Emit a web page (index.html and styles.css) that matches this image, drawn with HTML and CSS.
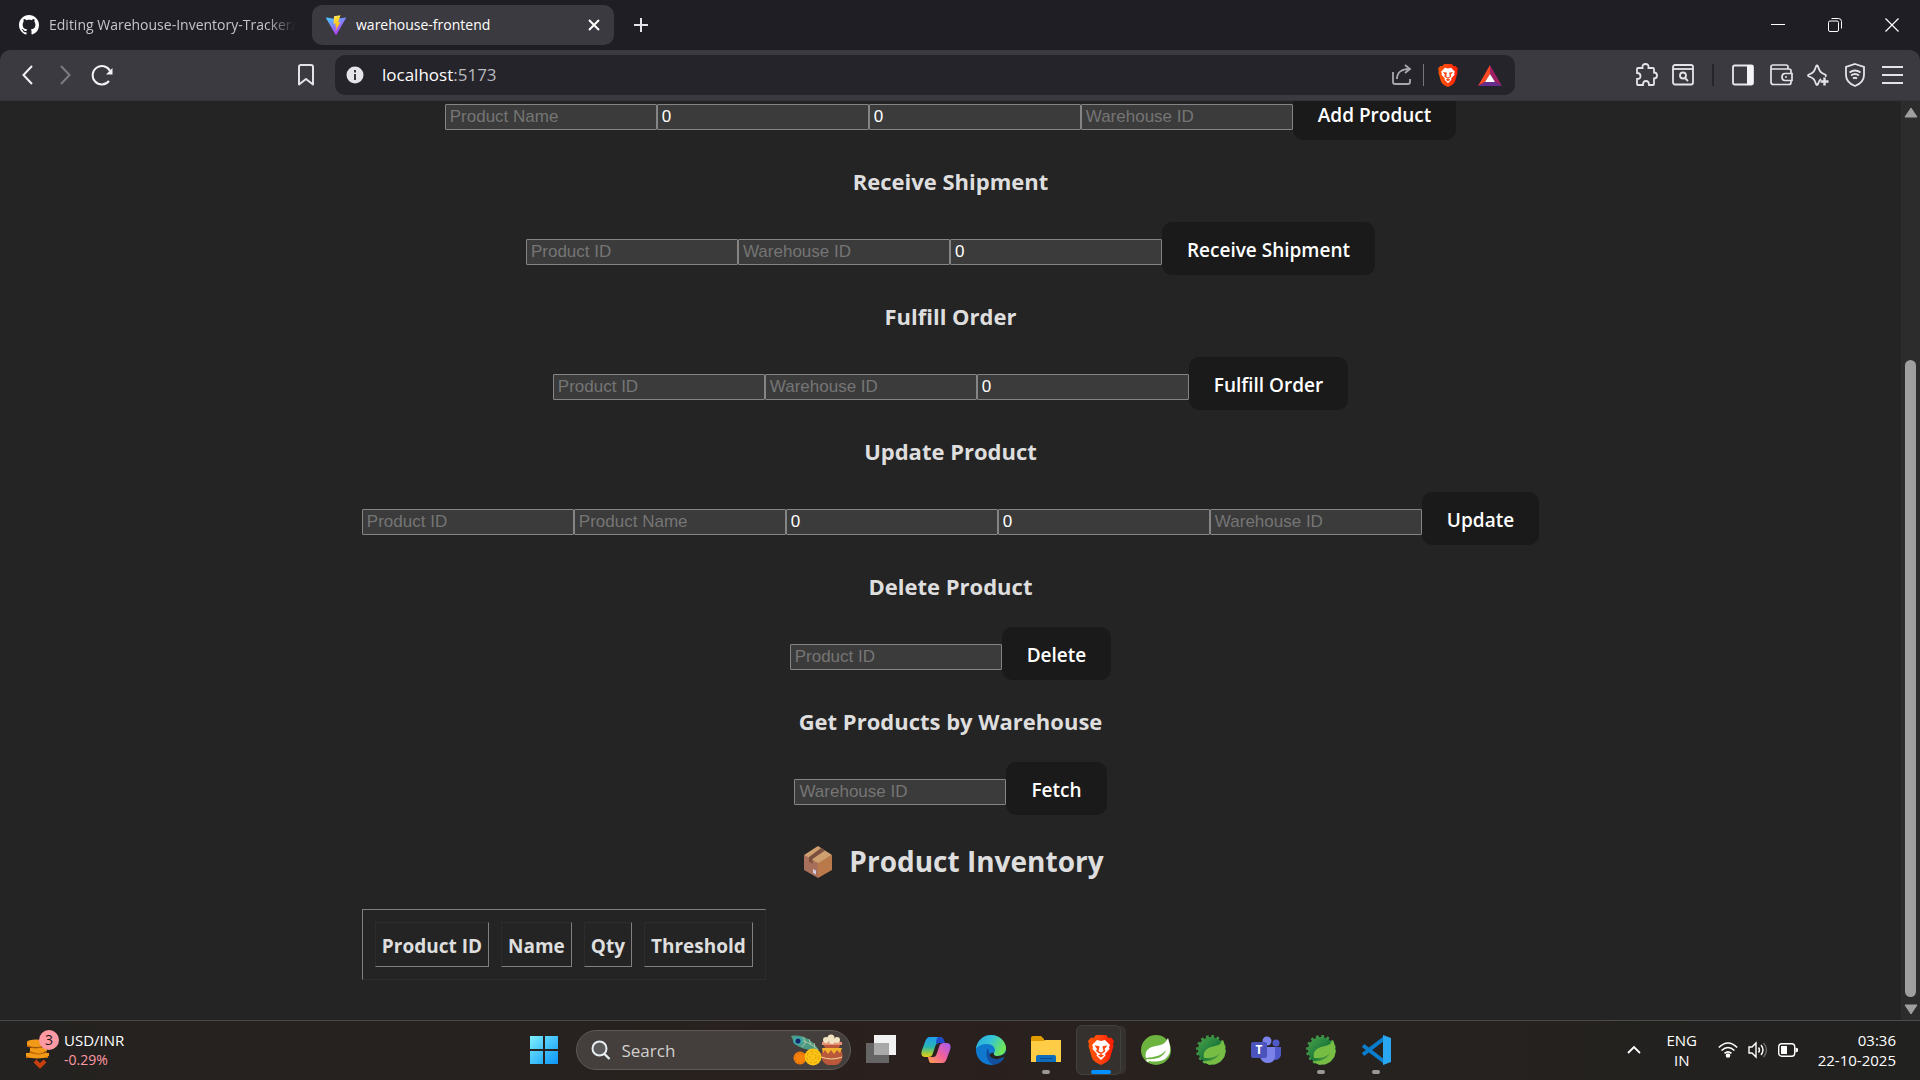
FILE: index.html
```html
<!DOCTYPE html>
<html lang="en">
<head>
<meta charset="utf-8">
<title>warehouse-frontend</title>
<link rel="stylesheet" href="styles.css">
</head>
<body>
<svg class="defs" aria-hidden="true">
  <defs>
    <linearGradient id="brave-fill" x1="0" y1="0" x2="1" y2="0"><stop offset="0" stop-color="#ff5500"/><stop offset=".45" stop-color="#ff4510"/><stop offset="1" stop-color="#ff1a00"/></linearGradient>
    <linearGradient id="gear-fill" x1="0" y1="0" x2="1" y2="1"><stop offset="0" stop-color="#4aa14a"/><stop offset=".5" stop-color="#1d7a3a"/><stop offset="1" stop-color="#6db33f"/></linearGradient>
    <symbol id="brave" viewBox="0 0 26 30">
      <path fill="url(#brave-fill)" d="M8 0h10l2.500 3 2.500-.5L26 6l-1 3 .5 2L22 23c-1 3-5 5-9 7-4-2-8-4-9-7L.5 11 1 9 0 6l3-3.500 2.500.5z"/>
      <path fill="#fff" d="M13 6l4-1 5 5-1 2 .5 2-4.500 5 .5 1.500L13 25l-4.500-4.500L9 19l-4.500-5L5 12l-1-2 5-5z"/>
      <path fill="#ff4510" d="M6.500 10.500l4.500.5.5 1-1 4 2.500 1.500 2.500-1.500-1-4 .5-1 4.500-.5-3 3.500 1 2-2.500 2L13 19l-2.500-1-2.500-2 1-2zM10 20.500l3-1.500 3 1.500-3 2z"/>
    </symbol>
    <symbol id="spring-boot" viewBox="0 0 30 30">
      <circle cx="15" cy="15" r="13" fill="url(#gear-fill)"/>
      <circle cx="15" cy="15" r="13.500" fill="none" stroke="#3d9643" stroke-width="3" stroke-dasharray="2.600 2.700"/>
      <circle cx="15" cy="16" r="12.500" fill="url(#gear-fill)"/>
      <path fill="#77bc43" d="M27 5c3 7 4 15-1 20-5 6-14 6-20 1 8 1 15-2 18-8-5 5-9 5-16 5-2-8 5-11 11-12 4-1 6-2 8-6z"/>
    </symbol>
  </defs>
</svg>

<div class="screen">
  <header class="tab-strip">
    <div class="tabs">
      <div class="tab">
        <svg class="tab-icon" viewBox="0 0 16 16"><path fill="#fff" d="M8 0C3.580 0 0 3.580 0 8c0 3.540 2.290 6.530 5.470 7.590.4.070.55-.17.55-.38 0-.19-.01-.82-.01-1.490-2.010.37-2.530-.49-2.690-.94-.09-.23-.48-.94-.82-1.130-.28-.15-.68-.52-.01-.53.63-.01 1.080.58 1.230.82.72 1.210 1.870.87 2.330.66.070-.52.28-.87.51-1.070-1.780-.2-3.640-.89-3.640-3.950 0-.87.31-1.590.82-2.150-.08-.2-.36-1.020.080-2.120 0 0 .67-.21 2.200.82.64-.18 1.320-.27 2-.27s1.360.090 2 .27c1.530-1.040 2.200-.82 2.200-.82.44 1.100.16 1.920.080 2.120.51.56.82 1.270.82 2.150 0 3.070-1.870 3.750-3.650 3.950.29.25.54.73.54 1.480 0 1.070-.01 1.930-.01 2.200 0 .21.15.46.55.38A8.010 8.010 0 0016 8c0-4.420-3.580-8-8-8z"/></svg>
        <span class="tab-title tab-title-faded">Editing Warehouse-Inventory-Tracker/</span>
      </div>
      <div class="tab tab-active">
        <svg class="tab-icon" viewBox="0 0 20 20">
          <defs><linearGradient id="vite-a" x1="0" y1="0" x2=".6" y2="1"><stop offset="0" stop-color="#41d1ff"/><stop offset="1" stop-color="#bd34fe"/></linearGradient><linearGradient id="vite-b" x1=".3" y1="0" x2=".5" y2="1"><stop offset="0" stop-color="#ffea83"/><stop offset=".2" stop-color="#ffdd35"/><stop offset="1" stop-color="#ffa800"/></linearGradient></defs>
          <path fill="url(#vite-a)" d="M.5 2.500L10 4l9.500-1.500c.4 0 .6.3.4.7l-9.500 16.500c-.2.300-.6.300-.8 0L.1 3.200c-.2-.4 0-.7.4-.7z"/>
          <path fill="url(#vite-b)" d="M14.500.2L8 1.300l-.5 7.500 2.300-.4-.7 3.200 1.500-.4-1.200 5.500 5-9.700-2.300.4z"/>
        </svg>
        <span class="tab-title">warehouse-frontend</span>
        <button class="tab-close" aria-label="Close tab"><svg width="12" height="12" viewBox="0 0 12 12"><path d="M1 1l10 10M11 1L1 11" stroke="#fff" stroke-width="2"/></svg></button>
      </div>
      <button class="new-tab" aria-label="New tab"><svg width="14" height="14" viewBox="0 0 14 14"><path d="M7 0v14M0 7h14" stroke="#e4e4e8" stroke-width="2"/></svg></button>
    </div>
    <div class="window-controls">
      <button aria-label="Minimize"><svg width="14" height="14" viewBox="0 0 14 14"><path d="M0 6.500h14" stroke="#fff"/></svg></button>
      <button aria-label="Restore"><svg width="14" height="14" viewBox="0 0 14 14" fill="none" stroke="#fff"><rect x=".5" y="3" width="10" height="10.500" rx="1.500"/><path d="M3.500.5h7a3 3 0 013 3v7"/></svg></button>
      <button aria-label="Close"><svg width="14" height="14" viewBox="0 0 14 14"><path d="M.5.500l13 13M13.500.500l-13 13" stroke="#fff" stroke-width="1.200"/></svg></button>
    </div>
  </header>

  <nav class="toolbar" aria-label="Browser toolbar">
    <div class="toolbar-left">
      <button aria-label="Back"><svg width="22" height="22" viewBox="0 0 22 22"><path d="M15 2l-8.500 9 8.500 9" fill="none" stroke="#f2f2f5" stroke-width="2"/></svg></button>
      <button aria-label="Forward"><svg width="22" height="22" viewBox="0 0 22 22"><path d="M7 2l8.500 9L7 20" fill="none" stroke="#7d7c83" stroke-width="2"/></svg></button>
      <button aria-label="Reload"><svg width="22" height="22" viewBox="0 0 22 22"><path d="M18 17A9.200 9.200 0 1119 7" fill="none" stroke="#f2f2f5" stroke-width="2"/><path d="M21.500 4v6.500H15z" fill="#f2f2f5"/></svg></button>
      <button class="bookmark" aria-label="Bookmark"><svg width="22" height="22" viewBox="0 0 22 22"><path d="M4 3q0-2 2-2h10q2 0 2 2v17.500L11 15l-7 5.500z" fill="none" stroke="#e4e4e8" stroke-width="2" stroke-linejoin="round"/></svg></button>
    </div>
    <div class="url-bar">
      <svg width="18" height="18" viewBox="0 0 18 18"><circle cx="9" cy="9" r="8.500" fill="#e4e4ea"/><path d="M9 4v2.500M9 8v6" stroke="#37363c" stroke-width="2"/></svg>
      <span class="url"><span class="host">localhost</span>:5173</span>
      <button aria-label="Share"><svg width="22" height="22" viewBox="0 0 22 22" fill="none" stroke="#a9a8b0" stroke-width="1.800"><path d="M2 8v10q0 2 2 2h13q2 0 2-2v-3M6 15c0-7 5-10 12-10M14 1l5 4-5 4"/></svg></button>
      <span class="url-divider"></span>
      <button aria-label="Brave Shields"><svg width="20" height="23"><use href="#brave"/></svg></button>
      <button aria-label="Rewards"><svg width="24" height="21" viewBox="0 0 24 21"><path fill="#ff4724" d="M12 0L0 21l7-4 5-8z"/><path fill="#9e1f63" d="M12 0l12 21-7-4-5-8z"/><path fill="#662d91" d="M0 21h24l-7-4H7z"/><path fill="#fff" d="M12 9l5 8H7z"/></svg></button>
    </div>
    <div class="toolbar-right">
      <button aria-label="Extensions"><svg width="24" height="24" viewBox="0 0 24 24"><path d="M4 5h4.500C8 2 9.500 1 11.500 1S15 2 14.500 5H19q1 0 1 1v3.500c2 0 3 1 3 3s-1 3-3 3V21q0 1-1 1h-4c0-3-1-4-3-4s-3 1-3 4H4q-1 0-1-1v-5c2.500 0 3.500-1 3.500-3s-1-3-3.500-3V6q0-1 1-1z" fill="none" stroke="#e4e4e8" stroke-width="1.800"/></svg></button>
      <button aria-label="Search tabs"><svg width="24" height="24" viewBox="0 0 24 24" fill="none" stroke="#e4e4e8" stroke-width="1.800"><rect x="2" y="2" width="20" height="19.500" rx="2"/><path d="M2 6h20"/><circle cx="12" cy="12.500" r="3"/><path d="M14 15l3 3"/></svg></button>
      <span class="bar-divider"></span>
      <button aria-label="Sidebar"><svg width="24" height="24" viewBox="0 0 24 24"><rect x="2" y="2.500" width="20" height="19" rx="1.500" fill="none" stroke="#e8e8ec" stroke-width="1.800"/><path fill="#f4f4f7" d="M16 2h6v20h-6z"/></svg></button>
      <button aria-label="Wallet"><svg width="24" height="24" viewBox="0 0 24 24" fill="none" stroke="#e4e4e8" stroke-width="1.700"><path d="M22 10V8q0-2-2-2H2v13q0 2.500 2.500 2.500H20q2 0 2-2v-2M2 6V4q0-2 2-2h13q2 0 2 2v2"/><path d="M23 10.500h-7q-3 0-3 3.500t3 3.500h7zM16 14h2"/></svg></button>
      <button aria-label="Leo AI"><svg width="24" height="24" viewBox="0 0 24 24" fill="none" stroke="#e4e4e8" stroke-width="1.800"><path d="M15 16c-1.500 1-2 2-3 5q-1 2-2 0c-1.500-5-3-6-7-7.500q-2-1 0-2C7 10 8.500 8.500 10 3.500q1-2 2 0c1.500 5 3 6.500 7 8q2 1 0 2"/><path d="M18.500 14.500v8M14.500 18.500h8" stroke-width="2.400"/></svg></button>
      <button aria-label="VPN"><svg width="24" height="24" viewBox="0 0 24 24" fill="none" stroke="#e4e4e8" stroke-width="1.800"><path d="M12 1l9 3v8c0 5-4 9-9 11-5-2-9-6-9-11V4z"/><path d="M6.500 9.500q5.500-4 11 0M8 12.500q4-3 8 0M10 15.500q2-1.500 4 0"/></svg></button>
      <button aria-label="Menu"><svg width="24" height="24" viewBox="0 0 24 24"><path d="M2 4h21M2 12h21M2 20h21" stroke="#e4e4e8" stroke-width="2"/></svg></button>
    </div>
  </nav>

  <div class="viewport">
    <div class="scroll-area">
      <main class="root">
        <form class="row">
          <input type="text" placeholder="Product Name" aria-label="Product Name">
          <input type="number" value="0" aria-label="Quantity">
          <input type="number" value="0" aria-label="Threshold">
          <input type="text" placeholder="Warehouse ID" aria-label="Warehouse ID">
          <button type="button">Add Product</button>
        </form>
        <h3>Receive Shipment</h3>
        <form class="row">
          <input type="text" placeholder="Product ID" aria-label="Product ID">
          <input type="text" placeholder="Warehouse ID" aria-label="Warehouse ID">
          <input type="number" value="0" aria-label="Quantity">
          <button type="button">Receive Shipment</button>
        </form>
        <h3>Fulfill Order</h3>
        <form class="row">
          <input type="text" placeholder="Product ID" aria-label="Product ID">
          <input type="text" placeholder="Warehouse ID" aria-label="Warehouse ID">
          <input type="number" value="0" aria-label="Quantity">
          <button type="button">Fulfill Order</button>
        </form>
        <h3>Update Product</h3>
        <form class="row">
          <input type="text" placeholder="Product ID" aria-label="Product ID">
          <input type="text" placeholder="Product Name" aria-label="Product Name">
          <input type="number" value="0" aria-label="Quantity">
          <input type="number" value="0" aria-label="Threshold">
          <input type="text" placeholder="Warehouse ID" aria-label="Warehouse ID">
          <button type="button">Update</button>
        </form>
        <h3>Delete Product</h3>
        <form class="row">
          <input type="text" placeholder="Product ID" aria-label="Product ID">
          <button type="button">Delete</button>
        </form>
        <h3>Get Products by Warehouse</h3>
        <form class="row">
          <input type="text" placeholder="Warehouse ID" aria-label="Warehouse ID">
          <button type="button">Fetch</button>
        </form>
        <h2>
          <svg class="package" viewBox="0 0 28 32" aria-hidden="true">
            <path fill="#a8705a" d="M0 9l14 7v16L0 24z"/>
            <path fill="#b9794b" d="M28 9l-14 7v16l14-8z"/>
            <path fill="#cfa06f" d="M14 0l14 9-14 8L0 9z"/>
            <path fill="#7c503f" d="M17 2l4 2.500L8.500 13v5L5 15.500V11z"/>
            <path fill="#d3c9df" d="M9 23l3 1.500v4L9 27z"/>
          </svg>
          <span>Product Inventory</span>
        </h2>
        <table class="inventory">
          <thead><tr><th>Product ID</th><th>Name</th><th>Qty</th><th>Threshold</th></tr></thead>
        </table>
      </main>
    </div>
    <div class="scrollbar" aria-hidden="true">
      <svg width="14" height="11" viewBox="0 0 14 11"><path d="M7 1l6 9H1z" fill="#9f9f9f" stroke="#9f9f9f" stroke-linejoin="round"/></svg>
      <div class="track"><div class="thumb"></div></div>
      <svg width="14" height="11" viewBox="0 0 14 11"><path d="M7 10l6-9H1z" fill="#9f9f9f" stroke="#9f9f9f" stroke-linejoin="round"/></svg>
    </div>
  </div>

  <footer class="taskbar">
    <div class="widget">
      <span class="coins">
        <svg width="34" height="38" viewBox="0 0 34 38">
          <path fill="#c96a05" d="M1 11h14v5H1zM4 17h14v5H4zM0 23h22v4H0z"/>
          <g fill="#f29a18"><ellipse cx="10" cy="11" rx="9" ry="2.500"/><path d="M1 11v3q9 4 18 0v-3z"/><path d="M4 17v3q8 4 17 0v-4z"/><path d="M0 22v3q11 5 23 0v-3z"/></g>
          <path fill="none" stroke="#b96408" d="M1 15q9 4 18 0M3 21q9 4 18 0"/>
          <path d="M9 30l5 5 5-5" fill="none" stroke="#c8400f" stroke-width="4"/>
        </svg>
        <span class="badge">3</span>
      </span>
      <span class="widget-text"><span>USD/INR</span><span class="loss">-0.29%</span></span>
    </div>
    <div class="apps">
      <button class="app" aria-label="Start"><svg width="30" height="30" viewBox="0 0 30 30"><defs><linearGradient id="win" x1="0" y1="0" x2="1" y2="1"><stop offset="0" stop-color="#7df0ff"/><stop offset="1" stop-color="#0a94f7"/></linearGradient></defs><path fill="url(#win)" d="M1 1h13v13H1zM16 1h13v13H16zM1 16h13v13H1zM16 16h13v13H16z"/></svg></button>
      <label class="search">
        <svg width="20" height="20" viewBox="0 0 20 20"><circle cx="8.500" cy="8.500" r="7" fill="#5b5b5b" stroke="#e6eef2" stroke-width="2"/><path d="M13.500 14l5 5" stroke="#e6eef2" stroke-width="2.400"/></svg>
        <input type="search" placeholder="Search" aria-label="Search">
        <svg width="54" height="32" viewBox="0 0 54 32">
          <path fill="#4d9a85" d="M1 2c10-2 20 2 28 14-9 1-18-1-24-6z"/><path fill="none" stroke="#a8c6a2" d="M5 5q14 2 23 11M13 3l3 6M19 5l2 6M24 9l1 5M12 13l4-5"/>
          <ellipse cx="8" cy="7" rx="5" ry="4" fill="#3aa9a5"/><circle cx="8" cy="7" r="2.500" fill="#17256b"/>
          <circle cx="10" cy="24" r="6.500" fill="#f5820a"/><circle cx="10" cy="24" r="5" fill="none" stroke="#d65b05" stroke-dasharray="2 2"/>
          <path fill="#b9583a" d="M33 9h18l-2 5c6 5 4 15-3 17h-8c-7-2-9-12-3-17z"/><path fill="#e8927a" d="M32 8h20v3H32z"/><path fill="#f2b02c" d="M32 14h20l-2 5-3-3-3 4-3-4-3 4-3-4-2 3z"/><path stroke="#f4d8a0" d="M31 23q11 4 21 0" fill="none"/>
          <g fill="#f1e3c0"><circle cx="36" cy="6" r="3"/><circle cx="41" cy="4" r="3.500"/><circle cx="47" cy="6" r="3"/><circle cx="42" cy="7" r="3"/></g>
          <circle cx="23" cy="23" r="8.500" fill="#fbc415"/><circle cx="23" cy="23" r="6" fill="none" stroke="#e69a06" stroke-dasharray="3 2"/><circle cx="23" cy="23" r="3" fill="none" stroke="#e69a06" stroke-dasharray="2 2"/>
        </svg>
      </label>
      <button class="app" aria-label="Task view"><svg width="30" height="30" viewBox="0 0 30 30"><path fill="#656565" d="M0 8h23v20H0z"/><path fill="#f2f2f2" d="M8 0h22v20H8z"/><path fill="#a9a9a9" d="M8 8h15v12H8z"/></svg></button>
      <button class="app" aria-label="Copilot"><svg width="30" height="28" viewBox="0 0 30 28">
        <defs><linearGradient id="cp-a" x1="0" y1="0" x2="0" y2="1"><stop offset="0" stop-color="#1f9df0"/><stop offset=".5" stop-color="#2bb5b0"/><stop offset=".8" stop-color="#9ecb3b"/><stop offset="1" stop-color="#f0c81e"/></linearGradient><linearGradient id="cp-b" x1="1" y1="0" x2="0" y2="1"><stop offset="0" stop-color="#a35cf5"/><stop offset=".5" stop-color="#f0609c"/><stop offset="1" stop-color="#ffa24a"/></linearGradient></defs>
        <path fill="url(#cp-a)" d="M9 1h10c3 0 3 3 4 6h-5c-2 0-3 1-4 4l-2 6c-1 3-2 4-5 4H4c-4 0-4-4-3-7l3-8c1-3 2-5 5-5z"/>
        <path fill="url(#cp-b)" d="M21 27H11c-3 0-3-2-4-6h5c2 0 3-1 4-4l2-6c1-3 2-4 5-4h3c4 0 4 4 3 7l-3 8c-1 3-2 5-5 5z"/>
        <path fill="#2149c9" d="M18 1c4 0 5 2 6 6h-6l-3 1c0-4 1-7 3-7z"/>
      </svg></button>
      <button class="app" aria-label="Edge"><svg width="30" height="30" viewBox="0 0 30 30">
        <defs><linearGradient id="ed-a" x1="0" y1="0" x2="1" y2=".4"><stop offset="0" stop-color="#2aa8dc"/><stop offset=".5" stop-color="#34c3d8"/><stop offset="1" stop-color="#6ee65a"/></linearGradient></defs>
        <circle cx="15" cy="15" r="15" fill="#0f79d0"/>
        <path fill="url(#ed-a)" d="M0 14C1 5 8 0 15 0c9 0 15 7 15 13 0 5-4 8-9 8-3 0-4-2-3-3 3-4-1-9-7-9-5 0-9 2-11 5z"/>
        <path fill="#124f9f" d="M12 13c-3 5-2 13 5 17 5-1 9-3 11-7-6 3-14 1-16-10z"/>
        <path fill="#272220" d="M18 18c-2-1-5 1-4 3 3 4 9 4 14 1 1 0 1 1 1 1l1-7c-2 4-5 5-9 5-3 0-4-2-3-3z"/>
      </svg></button>
      <button class="app app-open" aria-label="File Explorer"><svg width="30" height="30" viewBox="0 0 30 30"><path fill="#e09b00" d="M0 3q0-2 2-2h8l3 3v4H0z"/><path fill="#ffcd45" d="M0 6h12l2-1h16v22H0z"/><path fill="#0f6cbd" d="M5 27v-5q0-2 2-2h16q2 0 2 2v5z"/><path d="M9 23.500h12" stroke="#0a4a8a"/></svg></button>
      <button class="app app-current" aria-label="Brave"><svg width="26" height="30"><use href="#brave"/></svg></button>
      <button class="app" aria-label="Spring Tools"><svg width="30" height="30" viewBox="0 0 30 30"><circle cx="15" cy="15" r="15" fill="#6db33f"/><path fill="#fff" d="M27 3c2 7 4 14-1 19-4 5-12 5-18 4l-1 1-2-1 1-2c9 1 17-2 19-9-5 6-11 7-20 8C3 16 8 12 15 11c6-1 9-2 12-8z"/></svg></button>
      <button class="app" aria-label="Spring Boot"><svg width="30" height="30"><use href="#spring-boot"/></svg></button>
      <button class="app" aria-label="Teams"><svg width="30" height="30" viewBox="0 0 30 30"><circle cx="25" cy="8" r="3.500" fill="#5059c9"/><path fill="#5059c9" d="M21 12h9v8q-1 5-7 5z"/><circle cx="16" cy="6" r="4.500" fill="#7b83eb"/><path fill="#7b83eb" d="M9 12h15v10q-1 6-7 6t-8-6z"/><rect y="7" width="16" height="16" rx="2" fill="#4b53bc"/><text x="8" y="19" class="teams-letter">T</text></svg></button>
      <button class="app app-open" aria-label="Spring Boot dashboard"><svg width="30" height="30"><use href="#spring-boot"/></svg></button>
      <button class="app app-open" aria-label="Visual Studio Code"><svg width="30" height="30" viewBox="0 0 30 30"><path d="M2 10.500l21 16M2 19.500l21-16" stroke="#0a7dcc" stroke-width="4"/><path fill="#2aa7f2" d="M22 0l8 3v24l-8 3z"/></svg></button>
    </div>
    <div class="tray">
      <button aria-label="Show hidden icons"><svg width="16" height="10" viewBox="0 0 16 10"><path d="M2 8l6-6 6 6" fill="none" stroke="#fff" stroke-width="1.800"/></svg></button>
      <span class="lang"><span>ENG</span><span>IN</span></span>
      <span class="status">
        <svg width="20" height="16" viewBox="0 0 20 16" fill="none" stroke="#fff" stroke-width="1.600"><path d="M.8 5.500q9.200-9 18.400 0M3.500 8.500q6.500-6 13 0M6.500 11.300q3.500-3 7 0"/><circle cx="10" cy="13.500" r="1.500" fill="#fff"/></svg>
        <svg width="20" height="18" viewBox="0 0 20 18" fill="none" stroke="#fff" stroke-width="1.400"><path d="M1 6h3l4-4v14l-4-4H1z"/><path d="M10.500 6.500q2 2.500 0 5M13 4q4 5 0 10"/><path d="M15.500 2q6 7 0 14" stroke="#6a6a6a"/></svg>
        <svg width="20" height="14" viewBox="0 0 20 14"><rect x=".7" y=".7" width="16" height="12.500" rx="3" fill="none" stroke="#fff" stroke-width="1.400"/><rect x="3" y="3" width="6" height="8" fill="#fff"/><path fill="#fff" d="M17.500 4.500l2.500 1v3l-2.500 1z"/></svg>
      </span>
      <span class="clock"><span>03:36</span><span>22-10-2025</span></span>
    </div>
  </footer>
</div>
</body>
</html>
```
FILE: styles.css
```css
* { box-sizing: border-box; }

html, body { height: 100%; }

body {
  margin: 0;
  background: #242424;
  color: #dedede;
  font-family: "Open Sans", "Noto Sans", sans-serif;
  overflow: hidden;
}

button {
  border: 0;
  padding: 0;
  background: none;
  color: inherit;
  font-family: inherit;
}

svg { display: block; flex: none; }
.defs { position: absolute; width: 0; height: 0; }

.screen {
  height: 100%;
  display: flex;
  flex-direction: column;
  background: #1f1e25;
}

/* Tab strip */
.tab-strip {
  display: flex;
  justify-content: space-between;
  height: 50px;
  flex: none;
}
.tabs { display: flex; align-items: center; padding-left: 8px; }
.tab {
  display: flex;
  align-items: center;
  gap: 10px;
  width: 302px;
  height: 40px;
  padding: 0 14px 0 11px;
  border-radius: 10px;
  color: #c4c4c9;
  font-size: 14px;
}
.tab-active { margin-left: 2px; padding-left: 14px; background: #3b3a40; color: #fff; }
.tab-icon { width: 20px; height: 20px; }
.tab-title { flex: 1; padding-bottom: 2px; overflow: hidden; white-space: nowrap; }
.tab-title-faded { mask-image: linear-gradient(to right, #000 88%, transparent 100%); }
.new-tab { margin-left: 20px; }

.window-controls { display: flex; }
.window-controls button {
  display: grid;
  place-items: center;
  width: 57px;
}

/* Toolbar */
.toolbar {
  display: flex;
  align-items: center;
  flex: none;
  height: 51px;
  border-radius: 10px 10px 0 0;
  border-bottom: 1px solid #34333a;
  background: #3b3a40;
}
.toolbar-left {
  display: flex;
  align-items: center;
  gap: 15px;
  width: 335px;
  padding: 0 18px 0 17px;
}
.bookmark { margin-left: auto; }
.url-bar {
  display: flex;
  align-items: center;
  flex: 1;
  height: 40px;
  padding: 0 13px 0 11px;
  border-radius: 10px;
  background: #25242a;
}
.url { flex: 1; margin-left: 18px; padding-bottom: 2px; color: #b9b9be; font-size: 17px; }
.host { color: #fff; }
.url-divider { width: 1px; height: 22px; margin: 0 14px 0 10px; background: #77767e; }
.url-bar button + button { margin-left: 20px; }
.toolbar-right {
  display: flex;
  align-items: center;
  justify-content: space-between;
  width: 405px;
  padding: 0 16px 0 119px;
}
.bar-divider { width: 2px; height: 22px; margin: 0 4px; background: #252429; }

/* Page viewport, scrolled to its end */
.viewport {
  display: flex;
  flex: 1;
  min-height: 0;
  background: #242424;
}
.scroll-area {
  display: flex;
  flex: 1;
  flex-direction: column;
  justify-content: flex-end;
  overflow: hidden;
}
.root {
  width: fit-content;
  margin: 0 auto;
  padding-bottom: 40px;
}
.scrollbar {
  display: flex;
  flex-direction: column;
  align-items: center;
  width: 19px;
  padding: 6px 0 5px;
  background: #2c2c2c;
}
.track {
  display: flex;
  flex: 1;
  align-items: flex-end;
  padding: 7px 0;
}
.thumb { width: 11px; height: 73%; border-radius: 6px; background: #9f9f9f; }

h3 {
  margin: 24px 0 23px;
  font-size: 22px;
  line-height: 35px;
  text-align: center;
}
h2 {
  display: flex;
  align-items: center;
  justify-content: center;
  margin: 24px 0 25px;
  font-size: 28px;
  line-height: 45px;
}
.package { width: 28px; height: 32px; margin: 0 17px 0 7px; }

.row {
  display: flex;
  align-items: baseline;
  justify-content: center;
}
.row input {
  width: 212px;
  height: 26px;
  padding: 0 4px;
  border: 1px solid #858585;
  border-radius: 1px;
  background: #3b3b3b;
  color: #fff;
  font-family: "Liberation Sans", Arial, sans-serif;
  font-size: 17px;
  appearance: textfield;
}
.row input::placeholder { color: #757575; }
.row button {
  height: 53px;
  padding: 2px 25px 0;
  border-radius: 10px;
  background: #1a1a1a;
  color: #fff;
  font-size: 19px;
  font-weight: 600;
}

.inventory {
  border: 1px solid;
  border-color: #808080 #2c2c2c #2c2c2c #808080;
  border-spacing: 12px;
}
.inventory th {
  height: 45px;
  padding: 2px 6px 0;
  border: 1px solid;
  border-color: #2c2c2c #808080 #808080 #2c2c2c;
  font-size: 19px;
  line-height: 30px;
}

/* Taskbar */
.taskbar {
  display: grid;
  grid-template-columns: 1fr auto 1fr;
  align-items: center;
  flex: none;
  height: 60px;
  padding-bottom: 1px;
  border-top: 1px solid #4a4a4a;
  background: linear-gradient(to right, #242220, #27221f 30%, #2a201e 48%, #27221f 65%, #21211f);
  color: #fff;
  font-size: 15px;
  line-height: 20px;
}
.widget { display: flex; align-items: center; gap: 4px; padding-left: 26px; }
.coins { position: relative; }
.badge {
  position: absolute;
  top: -1px;
  right: 1px;
  width: 20px;
  height: 20px;
  border-radius: 50%;
  background: #ff99a4;
  color: #1a1a1a;
  font-size: 14px;
  text-align: center;
}
.widget-text { display: flex; flex-direction: column; }
.loss { color: #ff99a4; font-size: 14px; }

.apps { display: flex; align-items: center; }
.app {
  position: relative;
  display: grid;
  place-items: center;
  width: 55px;
  height: 50px;
}
.app-open::after, .app-current::after {
  content: "";
  position: absolute;
  bottom: 1px;
  left: 50%;
  width: 8px;
  height: 4px;
  margin-left: -4px;
  border-radius: 2px;
  background: #9a9894;
}
.app-current::before {
  content: "";
  position: absolute;
  inset: 0 8px 0 2px;
  z-index: -1;
  border: 1px solid #45413e;
  border-radius: 6px;
  background: #35312e;
  box-shadow: 6px 0 0 -1px #35312e;
}
.app-current { z-index: 0; }
.app-current::after { width: 20px; margin-left: -10px; background: #0090ff; }
.teams-letter { fill: #fff; font-size: 12px; font-weight: 700; text-anchor: middle; }

.search {
  display: flex;
  align-items: center;
  width: 275px;
  height: 40px;
  margin: 0 3px 0 4px;
  padding: 0 6px 0 14px;
  border: 1px solid #5d5956;
  border-radius: 20px;
  background: #443f3d;
}
.search input {
  flex: 1;
  min-width: 0;
  margin-left: 11px;
  padding: 0;
  border: 0;
  background: none;
  color: #fff;
  font-family: inherit;
  font-size: 17px;
}
.search input::placeholder { color: #d2d0ce; }

.tray {
  display: flex;
  align-items: center;
  justify-content: flex-end;
  padding-right: 24px;
}
.lang { display: flex; flex-direction: column; width: 44px; margin: 0 14px 0 18px; text-align: center; }
.status { display: flex; align-items: center; gap: 10px; margin-right: 20px; }
.clock { display: flex; flex-direction: column; text-align: right; }
```
